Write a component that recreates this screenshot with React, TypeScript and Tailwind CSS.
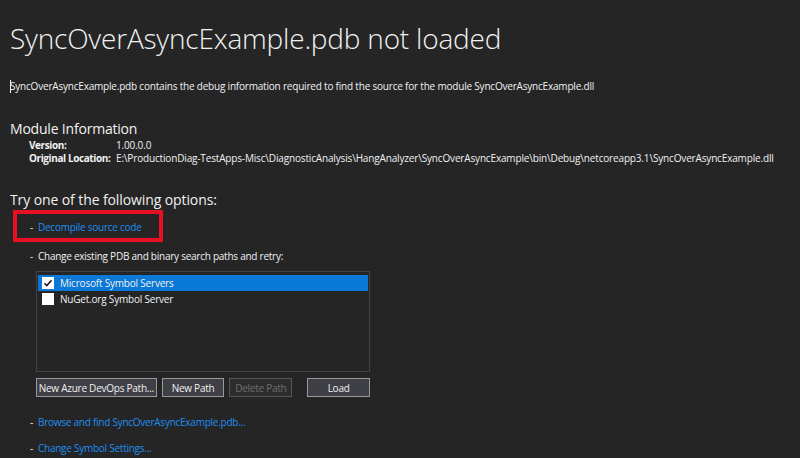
export default function App() {
  return (
    <div className="h-[458px] w-[800px] overflow-hidden bg-[#252526] font-['Open_Sans','Liberation_Sans',sans-serif] text-[#f1f1f1]">
      <div className="pl-[10px] pt-[18px]">
        <h1 className="text-[28px] font-light leading-[40px] tracking-[-0.2px]">SyncOverAsyncExample.pdb not loaded</h1>

        <p className="mt-[20px] flex items-center text-[10px] leading-[16px] tracking-[-0.2px]">
          <span className="mr-[-1px] inline-block h-[13px] w-px bg-[#f1f1f1]" />
          SyncOverAsyncExample.pdb contains the debug information required to find the source for the module SyncOverAsyncExample.dll
        </p>

        <h2 className="mt-[25px] text-[14px] leading-[20px] tracking-[-0.2px]">Module Information</h2>
        <div className="ml-[19px] grid grid-cols-[87px_1fr] text-[10px] leading-[13px] tracking-[-0.16px]">
          <span className="font-bold tracking-[-0.4px]">Version:</span>
          <span>1.00.0.0</span>
          <span className="font-bold tracking-[-0.4px]">Original Location:</span>
          <span className="whitespace-nowrap">E:\ProductionDiag-TestApps-Misc\DiagnosticAnalysis\HangAnalyzer\SyncOverAsyncExample\bin\Debug\netcoreapp3.1\SyncOverAsyncExample.dll</span>
        </div>

        <h2 className="mt-[25px] text-[14px] leading-[20px] tracking-[-0.1px]">Try one of the following options:</h2>

        <div className="ml-[3px] flex h-[32px] w-[150px] items-center border-[4px] border-[#e81123] pl-[13px] pt-[3px] text-[10px] tracking-[-0.25px]">
          <span className="mr-[5px]">-</span>
          <span className="text-[#1e8ff0]">Decompile source code</span>
        </div>

        <div className="ml-[20px] mt-[6px] flex items-center text-[10px] leading-[16px] tracking-[-0.25px]">
          <span className="mr-[5px]">-</span>
          <span>Change existing PDB and binary search paths and retry:</span>
        </div>

        <div className="ml-[26px] mt-[7px] w-[334px]">
          <div className="h-[101px] border border-[#434346] bg-[#252526] px-[1px] pt-[3px] text-[10px] tracking-[-0.2px]">
            <div className="flex h-[16px] items-center bg-[#0a78d7] pl-[4px]">
              <span className="flex h-[12px] w-[12px] items-center justify-center bg-white">
                <svg width="10" height="10" viewBox="0 0 10 10">
                  <path d="M1.5 5.2 L3.8 7.6 L8.6 2.2" fill="none" stroke="#1e1e1e" strokeWidth="1.6" />
                </svg>
              </span>
              <span className="ml-[6px]">Microsoft Symbol Servers</span>
            </div>
            <div className="flex h-[16px] items-center pl-[4px]">
              <span className="h-[12px] w-[12px] bg-white" />
              <span className="ml-[6px]">NuGet.org Symbol Server</span>
            </div>
          </div>

          <div className="mt-[6px] flex whitespace-nowrap text-[10px] tracking-[-0.25px]">
            <button className="h-[19px] w-[121px] border border-[#999999] bg-[#3f3f46] leading-[16px] text-[#f1f1f1]">
              New Azure DevOps Path...
            </button>
            <button className="ml-[5px] h-[19px] w-[63px] border border-[#999999] bg-[#3f3f46] leading-[16px] text-[#f1f1f1]">
              New Path
            </button>
            <button className="ml-[5px] h-[19px] w-[63px] border border-[#555555] bg-[#2d2d30] leading-[16px] text-[#6d6d6d]">
              Delete Path
            </button>
            <button className="ml-[15px] h-[19px] w-[63px] border border-[#999999] bg-[#3f3f46] leading-[16px] text-[#f1f1f1]">
              Load
            </button>
          </div>
        </div>

        <div className="ml-[20px] mt-[17px] flex items-center text-[10px] leading-[16px] tracking-[-0.25px]">
          <span className="mr-[5px]">-</span>
          <span className="text-[#1e8ff0]">Browse and find SyncOverAsyncExample.pdb...</span>
        </div>
        <div className="ml-[20px] mt-[10px] flex items-center text-[10px] leading-[16px] tracking-[-0.25px]">
          <span className="mr-[5px]">-</span>
          <span className="text-[#1e8ff0]">Change Symbol Settings...</span>
        </div>
      </div>
    </div>
  );
}
